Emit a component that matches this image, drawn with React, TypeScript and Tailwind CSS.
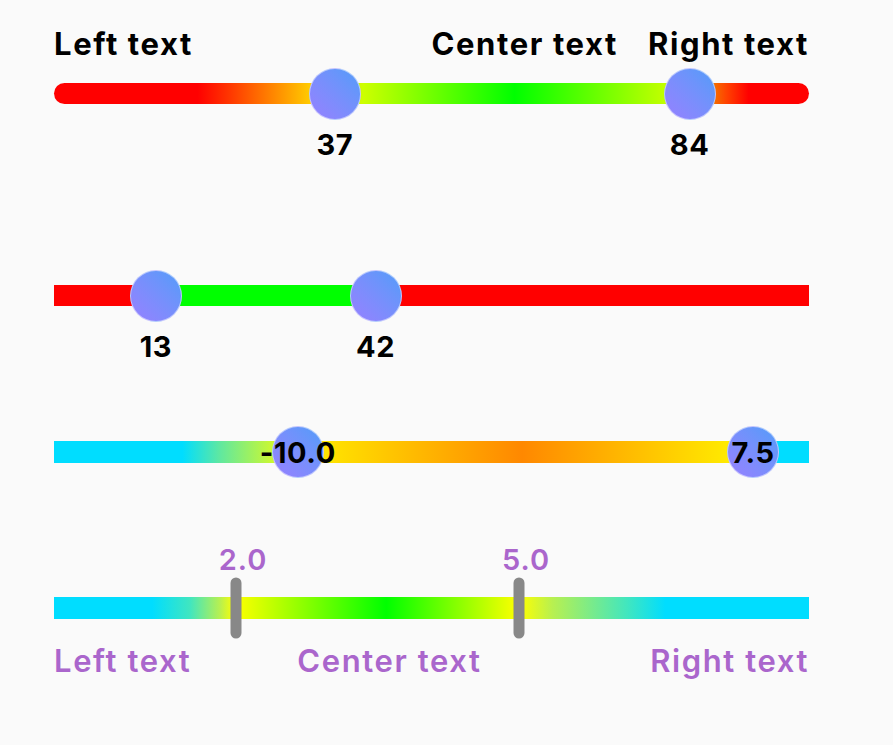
import React from "react";

const font = { fontFamily: "Inter, 'Open Sans', sans-serif" };

function Knob({ pos, children }: { pos: string; children?: React.ReactNode }) {
  return (
    <div
      className="absolute top-1/2 -translate-x-1/2 -translate-y-1/2 w-[52px] h-[52px] rounded-full bg-gradient-to-tr from-[#9580ff] to-[#4f9cf9] border border-white/50 flex items-center justify-center"
      style={{ left: pos }}
    >
      {children && (
        <span className="text-[29px] font-bold leading-none text-black tracking-[0.6px] whitespace-nowrap">
          {children}
        </span>
      )}
    </div>
  );
}

function Below({ pos, children }: { pos: string; children: React.ReactNode }) {
  return (
    <span
      className="absolute top-[47px] -translate-x-1/2 text-[29px] font-bold leading-none text-black tracking-[0.6px]"
      style={{ left: pos }}
    >
      {children}
    </span>
  );
}

function Marker({ pos, label }: { pos: string; label: string }) {
  return (
    <>
      <div
        className="absolute top-1/2 -translate-x-1/2 -translate-y-1/2 w-[11px] h-[61px] rounded-full bg-[#888888]"
        style={{ left: pos }}
      />
      <span
        className="absolute -top-[52px] -translate-x-[calc(50%-7px)] text-[29px] font-semibold leading-none text-[#aa66cc] tracking-[1px]"
        style={{ left: pos }}
      >
        {label}
      </span>
    </>
  );
}

export default function App() {
  return (
    <div className="min-h-screen bg-[#fafafa] pl-[54px] pt-[28px]" style={font}>
      <div className="w-[755px]">
        {/* slider 1 */}
        <div className="grid grid-cols-2 text-[31px] font-bold leading-none text-black tracking-[1.6px]">
          <span>Left text</span>
          <div className="flex justify-between">
            <span>Center text</span>
            <span>Right text</span>
          </div>
        </div>
        <div className="relative mt-[24px] h-[21px] rounded-full bg-[linear-gradient(to_right,#ff0000_0%,#ff0000_19%,#ff3300_23%,#ffcc00_34%,#ccff00_41%,#00ff00_61%,#ccff00_82%,#ff4400_89%,#ff0000_92%,#ff0000_100%)]">
          <Knob pos="37.2%" />
          <Knob pos="84.2%" />
          <Below pos="37.2%">37</Below>
          <Below pos="84.2%">84</Below>
        </div>

        {/* slider 2 */}
        <div className="relative mt-[181px] h-[21px] bg-[linear-gradient(to_right,#ff0000_0%,#ff0000_13.5%,#00ff00_13.5%,#00ff00_42.6%,#ff0000_42.6%,#ff0000_100%)]">
          <Knob pos="13.5%" />
          <Knob pos="42.6%" />
          <Below pos="13.5%">13</Below>
          <Below pos="42.6%">42</Below>
        </div>

        {/* slider 3 */}
        <div className="relative mt-[135px] h-[22px] bg-[linear-gradient(to_right,#00ddff_0%,#00ddff_17%,#60e8a0_22%,#ccf830_29%,#ffee00_33%,#ff8800_62%,#ffd000_82%,#fff000_91%,#00ddff_92.6%,#00ddff_100%)]">
          <Knob pos="32.3%">-10.0</Knob>
          <Knob pos="92.6%">7.5</Knob>
        </div>

        {/* slider 4 */}
        <div className="relative mt-[134px] h-[22px] bg-[linear-gradient(to_right,#00ddff_0%,#00ddff_13%,#40e6c0_18%,#b8f050_22%,#ffff00_24%,#00ff00_44%,#ffff00_61.6%,#b8f050_66%,#40e6c0_76%,#00ddff_81%,#00ddff_100%)]">
          <Marker pos="24.1%" label="2.0" />
          <Marker pos="61.6%" label="5.0" />
        </div>
        <div className="mt-[26px] flex text-[31px] font-semibold leading-none text-[#aa66cc] tracking-[1.6px]">
          <span>Left text</span>
          <span className="ml-[106px]">Center text</span>
          <span className="ml-auto">Right text</span>
        </div>
      </div>
    </div>
  );
}
